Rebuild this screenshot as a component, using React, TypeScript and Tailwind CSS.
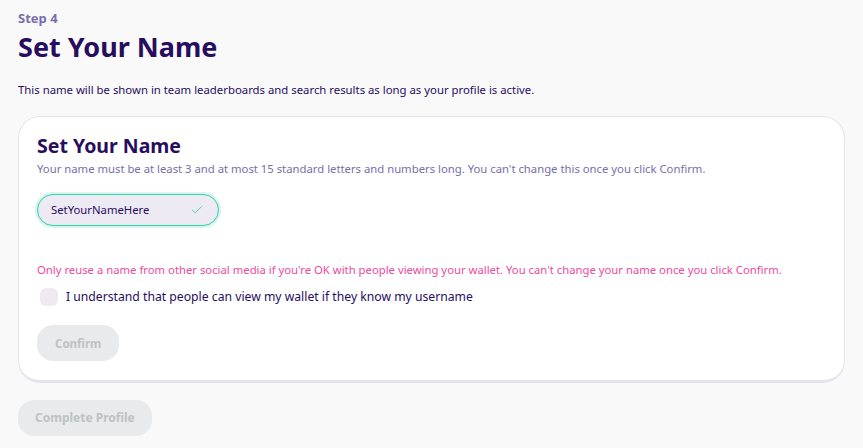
import { Check } from "lucide-react";

const font = { fontFamily: "'Noto Sans', 'Open Sans', sans-serif" };

export default function App() {
  return (
    <div className="min-h-[448px] bg-[#faf9fa] px-[18px] pt-[10px] pb-3" style={font}>
      <div className="text-[13px] font-bold leading-4 text-[#7a6eaa]">Step 4</div>
      <h1 className="mt-[5px] text-[27px] font-bold leading-8 text-[#280d5f]">Set Your Name</h1>
      <p className="mt-[19px] text-[11.35px] leading-4 text-[#280d5f]">
        This name will be shown in team leaderboards and search results as long as your profile is active.
      </p>

      <div className="mt-[18px] rounded-[22px] border border-[#e7e3eb] border-b-[3px] bg-white px-[18px] pt-[17px] pb-[19px]">
        <h2 className="text-[19.5px] font-bold leading-6 text-[#280d5f]">Set Your Name</h2>
        <p className="mt-[3px] text-[11.3px] leading-4 text-[#7a6eaa]">
          Your name must be at least 3 and at most 15 standard letters and numbers long. You can't change this once you click Confirm.
        </p>

        <div className="mt-[17px] flex h-8 w-[182px] items-center justify-between rounded-2xl border border-[#31d0aa] bg-[#eeeaf4] pl-[13px] pr-[14px] shadow-[0_0_0_2px_rgba(49,208,170,0.2)]">
          <span className="text-[11.3px] text-[#280d5f]">SetYourNameHere</span>
          <Check className="h-[14px] w-[14px] text-[#31d0aa]" strokeWidth={1.5} />
        </div>

        <p className="mt-[36px] text-[11.3px] leading-4 text-[#ed4b9e]">
          Only reuse a name from other social media if you're OK with people viewing your wallet. You can't change your name once you click Confirm.
        </p>

        <label className="mt-[10px] flex items-center gap-[8px] pl-[3px]">
          <span className="h-[18px] w-[18px] rounded-[6px] bg-[#eeeaf4]" />
          <span className="text-[12.2px] text-[#280d5f]">I understand that people can view my wallet if they know my username</span>
        </label>

        <button className="mt-[19px] h-9 rounded-2xl bg-[#e9eaeb] px-[18px] text-[11.5px] font-bold text-[#bdc2c4]">
          Confirm
        </button>
      </div>

      <button className="mt-[17px] h-9 rounded-2xl bg-[#e9eaeb] px-[17px] text-[12px] font-bold text-[#bdc2c4]">
        Complete Profile
      </button>
    </div>
  );
}
